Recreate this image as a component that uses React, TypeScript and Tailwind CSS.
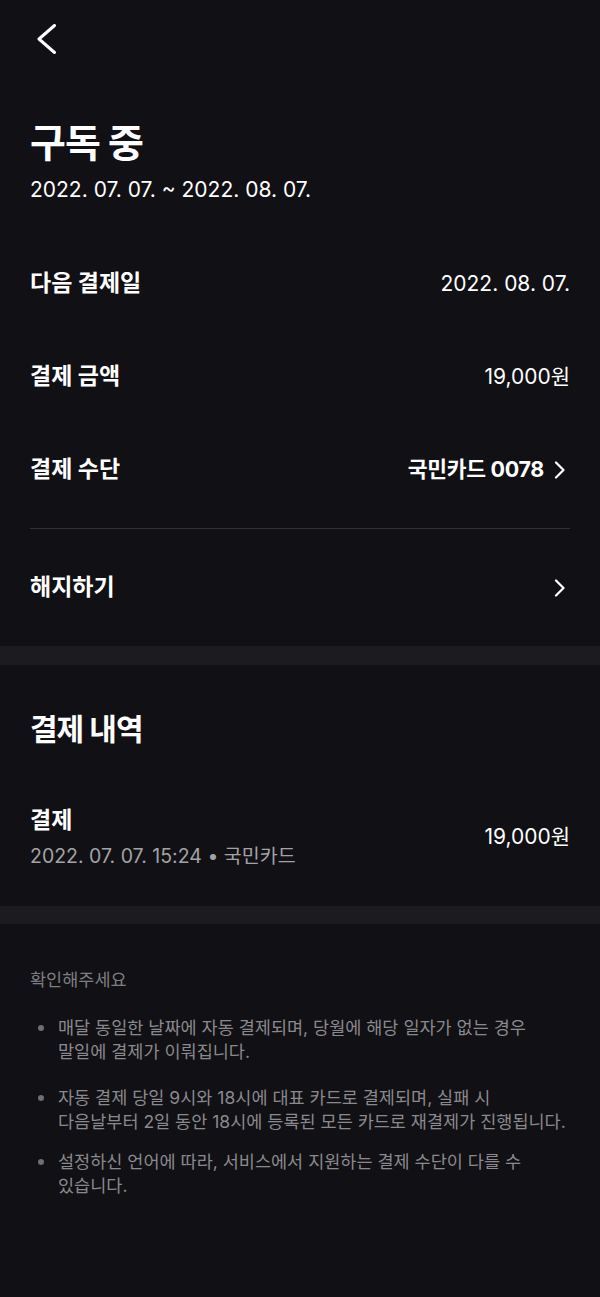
import React from 'react';

const FONT = { fontFamily: 'Inter, "Noto Sans CJK KR", sans-serif' };

function ChevronRight() {
    return (
        <svg width="12" height="18" viewBox="0 0 12 18" fill="none" className="shrink-0 mr-[4px]">
            <polyline points="2,1.5 9.5,9 2,16.5" stroke="#ffffff" strokeWidth="2.2" strokeLinecap="round" strokeLinejoin="round" />
        </svg>
    );
}

function InfoRow({ label, children }: { label: string; children: React.ReactNode }) {
    return (
        <div className="h-[93px] flex items-center justify-between">
            <span className="text-[23px] font-bold text-white">{label}</span>
            {children}
        </div>
    );
}

const notes = [
    { gap: 'mt-0', lines: ['매달 동일한 날짜에 자동 결제되며, 당월에 해당 일자가 없는 경우', '말일에 결제가 이뤄집니다.'] },
    { gap: 'mt-[22px]', lines: ['자동 결제 당일 9시와 18시에 대표 카드로 결제되며, 실패 시', '다음날부터 2일 동안 18시에 등록된 모든 카드로 재결제가 진행됩니다.'] },
    { gap: 'mt-[16px]', lines: ['설정하신 언어에 따라, 서비스에서 지원하는 결제 수단이 다를 수', '있습니다.'] },
];

export default function App() {
    return (
        <div className="w-[600px] min-h-[1297px] bg-[#111014] text-white" style={FONT}>
            {/* 상단 뒤로가기 */}
            <div className="h-[78px] pl-[36px] pt-[24px]">
                <svg width="22" height="30" viewBox="0 0 22 30" fill="none">
                    <polyline points="18.5,1.5 3,15 18.5,28.5" stroke="#ffffff" strokeWidth="3" strokeLinecap="round" strokeLinejoin="round" />
                </svg>
            </div>

            {/* 구독 상태 */}
            <div className="px-[30px]">
                <h1 className="text-[39px] leading-[44px] font-bold tracking-[-1px] mt-[43px]">구독 중</h1>
                <p className="text-[21px] leading-[28px] mt-[11px]">2022. 07. 07. ~ 2022. 08. 07.</p>

                <div className="mt-[33px]">
                    <InfoRow label="다음 결제일">
                        <span className="text-[21px]">2022. 08. 07.</span>
                    </InfoRow>
                    <InfoRow label="결제 금액">
                        <span className="text-[21px]">19,000원</span>
                    </InfoRow>
                    <InfoRow label="결제 수단">
                        <span className="flex items-center gap-[10px]">
                            <span className="text-[21.5px] font-bold tracking-[-0.3px]">국민카드 0078</span>
                            <ChevronRight />
                        </span>
                    </InfoRow>
                </div>

                <div className="h-px bg-[#323136] mt-[12px]" />

                <div className="h-[117px] flex items-center justify-between">
                    <span className="text-[23px] font-bold">해지하기</span>
                    <ChevronRight />
                </div>
            </div>

            <div className="h-[19px] bg-[#1c1b1f]" />

            {/* 결제 내역 */}
            <div className="px-[30px]">
                <h2 className="text-[30px] leading-[40px] font-bold tracking-[-1px] pt-[44px]">결제 내역</h2>
                <div className="flex items-center justify-between pt-[56px] pb-[37px]">
                    <div className="flex flex-col gap-[8px]">
                        <span className="text-[23px] leading-[30px] font-bold">결제</span>
                        <span className="text-[19.5px] leading-[26px] text-[#a3a3a7]">2022. 07. 07. 15:24 • 국민카드</span>
                    </div>
                    <span className="text-[21px]">19,000원</span>
                </div>
            </div>

            <div className="h-[18px] bg-[#1c1b1f]" />

            {/* 안내 */}
            <div className="px-[30px] pt-[44px] pb-[80px]">
                <p className="text-[17.5px] leading-[24px] text-[#7f7e83]">확인해주세요</p>
                <ul className="mt-[24px] flex flex-col">
                    {notes.map((note, i) => (
                        <li key={i} className={`${note.gap} flex text-[17.5px] leading-[24px] text-[#8a898e]`}>
                            <span className="w-[28px] shrink-0 flex pl-[8px] pt-[9px]">
                                <span className="w-[6px] h-[6px] rounded-full bg-[#6f6e73]" />
                            </span>
                            <span className="whitespace-nowrap">
                                {note.lines[0]}
                                <br />
                                {note.lines[1]}
                            </span>
                        </li>
                    ))}
                </ul>
            </div>
        </div>
    );
}
